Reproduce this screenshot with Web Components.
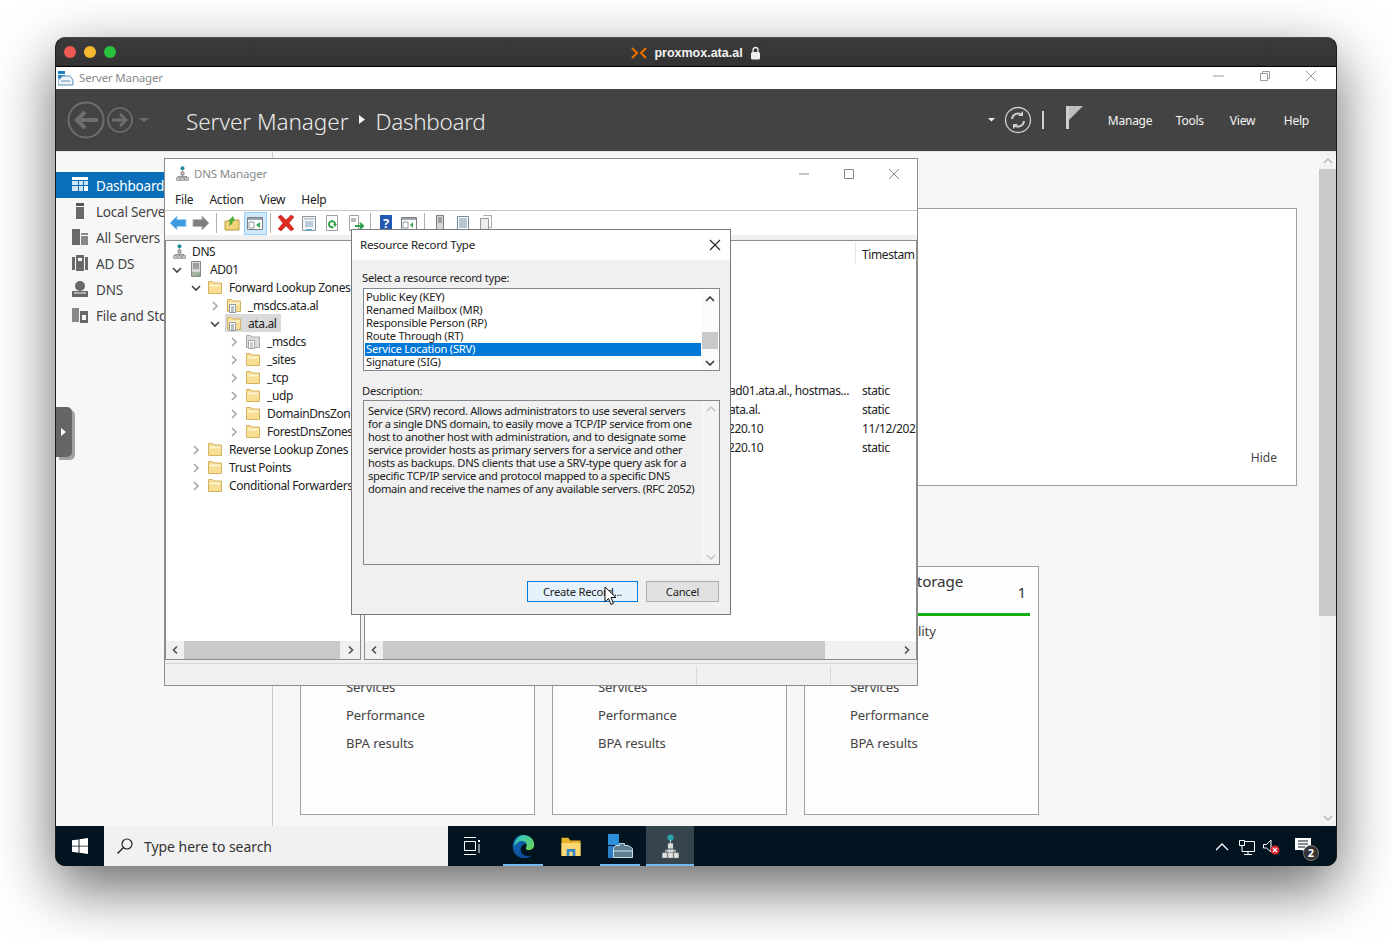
<!DOCTYPE html>
<html>
<head>
<meta charset="utf-8">
<title>Server Manager</title>
<style>
  html, body { margin: 0; background: #fff; }
  body {
    width: 1392px;
    height: 940px;
    overflow: hidden;
    padding: 37px 0 0 55px;
    box-sizing: border-box;
    font-family: "Noto Sans", "Open Sans", sans-serif;
    font-size: 12px;
    color: #222;
  }
</style>
</head>
<body>
<mac-window label="proxmox.ata.al">
  <server-manager></server-manager>
  <win-taskbar></win-taskbar>
</mac-window>

<script>
const chevDown = c => `<svg width="12" height="12" viewBox="0 0 12 12"><path d="M2 4l4 4 4-4" fill="none" stroke="${c || '#444'}" stroke-width="1.6"/></svg>`;
const chevRight = c => `<svg width="12" height="12" viewBox="0 0 12 12"><path d="M4 2l4 4-4 4" fill="none" stroke="${c || '#a6a6a6'}" stroke-width="1.6"/></svg>`;

const FOLDER = '<path d="M1.500 1.500h4l1.500 1.500h7.500v10.500h-13z" fill="#f8dd92" stroke="#d3b260"/><path d="M2.500 4.500h11v2h-11z" fill="#fdf3d0"/>';
const ICONS = {
  folder: `<svg width="16" height="15" viewBox="0 0 16 15">${FOLDER}</svg>`,
  zone: `<svg width="16" height="15" viewBox="0 0 16 15">${FOLDER}<path d="M3.500 6.500h6v8h-6z" fill="#fff" stroke="#8c9aa3"/><path d="M5 9h3M5 11h3M5 13h3" stroke="#6f7f88"/></svg>`,
  zoneGray: `<svg width="16" height="15" viewBox="0 0 16 15"><path d="M1.500 1.500h4l1.500 1.500h7.500v10.500h-13z" fill="#dcdcdc" stroke="#a8a8a8"/><path d="M3.500 6.500h6v8h-6z" fill="#fff" stroke="#a5a5a5"/><path d="M5 9h3M5 11h3M5 13h3" stroke="#999"/></svg>`,
  server: `<svg width="16" height="16" viewBox="0 0 16 16"><path d="M3.500.5h9v15h-9z" fill="#d8d8d8" stroke="#8a8a8a"/><path d="M5 3h6M5 5h6M5 7h6" stroke="#666"/><path d="M4 11h8v4h-8z" fill="#a9b3a4"/><path d="M10 13h1.500v1.500h-1.500z" fill="#39b54a"/></svg>`,
  dns: `<svg width="13" height="15" viewBox="0 0 16 18"><circle cx="8" cy="2.500" r="2.500" fill="#1f8f9a"/><path d="M7.500 5h1v3h-1zM2.500 12h11v1h-11zM2.500 12h1v2h-1zM7.500 11h1v3h-1zM12.500 12h1v2h-1z" fill="#777"/><path d="M6 7h4v4h-4z" fill="#b9b9b9" stroke="#777" stroke-width=".6"/><path d="M.5 14h4.500v3.500h-4.500zM5.800 14h4.500v3.500h-4.500zM11 14h4.500v3.500h-4.500z" fill="#c9c9c9" stroke="#777" stroke-width=".7"/></svg>`
};

class MacWindow extends HTMLElement {
  constructor() {
    super();
    this.attachShadow({ mode: 'open' });
    this.shadowRoot.innerHTML = `
      <style>
        :host {
          display: flex;
          flex-direction: column;
          width: 1282px;
          height: 829px;
          box-sizing: border-box;
          border: 1px solid #1d1d1d;
          border-top-color: #4c4c4c;
          border-bottom: 0;
          border-radius: 10px;
          overflow: hidden;
          background: #000;
          box-shadow: 0 22px 60px rgba(0,0,0,.6);
        }
        .bar {
          flex: none;
          height: 27px;
          display: flex;
          align-items: center;
          justify-content: center;
          position: relative;
          background: linear-gradient(#3b3b3b, #333);
          border-bottom: 1px solid #000;
          color: #f2f2f2;
          font-family: "Liberation Sans", sans-serif;
          font-weight: 700;
          font-size: 12.500px;
          gap: 7px;
          padding-top: 1px;
        }
        .lights { position: absolute; left: 8px; top: 8px; display: flex; gap: 8px; }
        .lights i { width: 12px; height: 12px; border-radius: 50%; display: block; }
      </style>
      <div class="bar">
        <div class="lights">
          <i style="background:#ee5a52"></i><i style="background:#f5b82e"></i><i style="background:#28c23f"></i>
        </div>
        <svg width="16" height="12" viewBox="0 0 16 12"><path d="M1 1l5 5-5 5M15 1l-5 5 5 5" fill="none" stroke="#e57000" stroke-width="2.200"/></svg>
        <span>${this.getAttribute('label')}</span>
        <svg width="11" height="14" viewBox="0 0 11 14"><path d="M3 6V4a2.500 2.500 0 015 0v2" fill="none" stroke="#eee" stroke-width="1.300"/><rect x="1" y="6" width="9" height="7.500" rx="1.500" fill="#eee"/></svg>
      </div>
      <slot></slot>
    `;
  }
}

class ServerManager extends HTMLElement {
  constructor() {
    super();
    this.attachShadow({ mode: 'open' });
    this.shadowRoot.innerHTML = `
      <style>
        :host { display: flex; flex-direction: column; flex: 1; min-height: 0; background: #f7f7f7; }
        .caption {
          flex: none; height: 22px; background: #fff; display: flex; align-items: center;
          padding-left: 2px; color: #8a8a8a; font-size: 11.500px; gap: 5px; letter-spacing: -.18px;
        }
        .caption span { margin-top: -2px; }
        .caption .ctl { margin-left: auto; display: flex; gap: 30px; padding-right: 17px; margin-top: -4px; }
        .ctl svg { display: block; }
        .head {
          flex: none; height: 62px; background: #434343; display: flex; align-items: center;
          color: #f0f0f0; box-sizing: border-box; padding: 0 27px 0 11px;
        }
        .crumb { font-size: 22.500px; font-weight: 300; margin-left: 35px; margin-top: 2px; display: flex; align-items: center; color: #eaeaea; letter-spacing: -.05px; }
        .tri { margin: 0 10px 3px 11px; }
        .tools { margin-left: auto; display: flex; align-items: center; }
        .flag { margin-left: -7px; margin-top: -5px; }
        .menu { display: flex; font-size: 12px; color: #f4f4f4; letter-spacing: -.25px; }
        .menu span:nth-child(1) { margin-left: 23px; width: 68px; }
        .menu span:nth-child(2) { width: 54px; }
        .menu span:nth-child(3) { width: 54px; }
        .body { flex: 1; min-height: 0; display: flex; position: relative; overflow: hidden; border-top: 1px solid #e4e4e4; box-sizing: border-box; }
        .main { flex: 1; min-width: 0; padding: 56px 22px 0 27px; box-sizing: border-box; }
        .welcome {
          height: 278px; box-sizing: border-box; background: #fff; border: 1px solid #a0a0a0;
          display: flex; align-items: flex-end; justify-content: flex-end;
          padding: 0 19px 19px 0; color: #444; font-size: 12px;
        }
        .cards { display: grid; grid-template-columns: repeat(3, 235px); gap: 17px; margin-top: 80px; }
        .tab {
          position: absolute; left: 0; top: 255px; width: 16px; height: 50px;
          background: #666; border-radius: 0 5px 5px 0; box-shadow: 3px 3px 0 #a2a2a2;
          display: flex; align-items: center; justify-content: center;
        }
        dns-manager { position: absolute; left: 108px; top: 6px; }
        record-dialog { position: absolute; left: 295px; top: 77px; }
        .cursor { position: absolute; left: 548px; top: 434px; }
      </style>
      <div class="caption">
        <svg width="16" height="16" viewBox="0 0 16 16"><path d="M0 1h7v3h-7zM0 5h7v3h-7z" fill="#1c7fc4"/><path d="M0 9h2l2-3h8l3 4v5h-15z" fill="#eef3f7" stroke="#5d93b9"/><path d="M3 11h9" stroke="#5d93b9"/></svg>
        <span>Server Manager</span>
        <div class="ctl">
          <svg width="16" height="12" viewBox="0 0 16 12"><path d="M2 6h11" stroke="#9a9a9a"/></svg>
          <svg width="16" height="12" viewBox="0 0 16 12"><path d="M3.500 3.500h7v7h-7zM5.500 3.500v-2h7v7h-2" fill="none" stroke="#9a9a9a"/></svg>
          <svg width="16" height="12" viewBox="0 0 16 12"><path d="M3 1l10 10M13 1l-10 10" stroke="#9a9a9a"/></svg>
        </div>
      </div>
      <div class="head">
        <svg width="84" height="40" viewBox="0 0 84 40">
          <circle cx="19" cy="20" r="17.500" fill="none" stroke="#6e6e6e" stroke-width="2"/>
          <path d="M31 20h-20M18 12l-8 8 8 8" fill="none" stroke="#6e6e6e" stroke-width="4"/>
          <circle cx="53" cy="20" r="12" fill="none" stroke="#6e6e6e" stroke-width="1.700"/>
          <path d="M45 20h14M53 14l6 6-6 6" fill="none" stroke="#6e6e6e" stroke-width="2.800"/>
          <path d="M72 18h10l-5 4z" fill="#6e6e6e"/>
        </svg>
        <div class="crumb">
          <span>Server Manager</span>
          <svg class="tri" width="6" height="9" viewBox="0 0 6 9"><path d="M0 0l6 4.500-6 4.500z" fill="#f4f4f4"/></svg>
          <span style="letter-spacing:-.3px">Dashboard</span>
        </div>
        <div class="tools">
          <svg width="84" height="30" viewBox="0 0 84 30">
            <path d="M0 13h7l-3.500 3.500z" fill="#eee"/>
            <circle cx="30" cy="15" r="12.500" fill="none" stroke="#cfcfcf" stroke-width="1.300"/>
            <path d="M24 14a6 6 0 0110-4M36 16a6 6 0 01-10 4" fill="none" stroke="#cfcfcf" stroke-width="2"/>
            <path d="M35 6v5h-5zM25 24v-5h5z" fill="#cfcfcf"/>
            <path d="M55 6v18" stroke="#cfcfcf" stroke-width="2"/>
          </svg>
          <svg class="flag" width="20" height="26" viewBox="0 0 20 26">
            <path d="M1 1h3v23h-3z" fill="#d0d0d0"/><path d="M4 1h14l-14 14z" fill="#bdbdbd"/>
          </svg>
          <div class="menu"><span>Manage</span><span>Tools</span><span>View</span><span>Help</span></div>
        </div>
      </div>
      <div class="body">
        <sm-sidebar></sm-sidebar>
        <div class="main">
          <div class="welcome">Hide</div>
          <div class="cards">
            <role-card></role-card>
            <role-card></role-card>
            <role-card name="File and Storage Services" count="1"></role-card>
          </div>
        </div>
        <win-vscroll></win-vscroll>
        <div class="tab"><svg width="6" height="8" viewBox="0 0 6 8"><path d="M0 0l5 4-5 4z" fill="#fff"/></svg></div>
        <dns-manager></dns-manager>
        <record-dialog></record-dialog>
        <svg class="cursor" width="14" height="20" viewBox="0 0 14 20"><path d="M1 1v15l3.500-3.500 2.500 6 2.500-1-2.500-6h5z" fill="#fff" stroke="#111"/></svg>
      </div>
    `;
  }
}

class SmSidebar extends HTMLElement {
  constructor() {
    super();
    this.attachShadow({ mode: 'open' });
    const g = '#6a6a6a';
    const items = [
      ['Dashboard', `<path d="M0 0h16v3h-16z" fill="#fff"/><path d="M0 4h6v4h-6zM7 4h4v4h-4zM12 4h4v4h-4zM0 9h6v5h-6zM7 9h4v5h-4z" fill="#cfe5f6"/><path d="M12 9h4v5h-4z" fill="#fff"/>`],
      ['Local Server', `<path d="M4 0h8v3h-8z" fill="#555"/><path d="M4 4h8v12h-8z" fill="${g}"/>`],
      ['All Servers', `<path d="M0 0h8v16h-8z" fill="${g}"/><path d="M9 4h7v2h-7zM9 7h7v9h-7z" fill="#888"/>`],
      ['AD DS', `<path d="M0 2h3v13h-3zM4 0h8v16h-8zM13 2h3v13h-3z" fill="${g}"/><path d="M6 3h4v3h-4z" fill="#f7f7f7"/>`],
      ['DNS', `<circle cx="8" cy="5" r="5" fill="${g}"/><path d="M0 10h16v6h-16z" fill="#666"/><path d="M2 12h12" stroke="#f7f7f7"/>`],
      ['File and Storage Services', `<path d="M0 1h7v14h-7z" fill="#888"/><path d="M8 4h8v12h-8z" fill="#666"/><path d="M10 8h4v5h-4z" fill="#f7f7f7"/>`]
    ];
    this.shadowRoot.innerHTML = `
      <style>
        :host { display: block; flex: none; width: 217px; box-sizing: border-box; border-right: 1px solid #c8c8c8; padding-top: 20px; }
        .item { height: 26px; display: flex; align-items: center; padding-left: 16px; gap: 8px; font-size: 13.500px; color: #444; white-space: nowrap; letter-spacing: -.2px; }
        .item span { padding-top: 2px; }
        .item.on { background: #0a6fb8; color: #fff; }
        svg { flex: none; }
      </style>
      ${items.map((it, i) => `
        <div class="item ${i === 0 ? 'on' : ''}">
          <svg width="16" height="16" viewBox="0 0 16 16">${it[1]}</svg><span>${it[0]}</span>
        </div>`).join('')}
    `;
  }
}

class RoleCard extends HTMLElement {
  constructor() {
    super();
    this.attachShadow({ mode: 'open' });
    this.shadowRoot.innerHTML = `
      <style>
        :host { display: block; height: 249px; box-sizing: border-box; border: 1px solid #a0a0a0; background: #fdfdfd; padding: 4px 8px 0 45px; color: #444; font-size: 13.100px; letter-spacing: -.1px; }
        .top { height: 42px; position: relative; font-size: 15.200px; color: #333; line-height: 20px; }
        .top b { font-weight: 400; display: block; width: 130px; }
        .top i { position: absolute; right: 4px; top: 11px; font-style: normal; }
        .bar { height: 3px; background: #12b012; margin-bottom: 1px; }
        .links div { height: 28px; line-height: 28px; }
      </style>
      <div class="top"><b>${this.getAttribute('name') || ''}</b><i>${this.getAttribute('count') || ''}</i></div>
      <div class="bar"></div>
      <div class="links">
        <div>Manageability</div><div>Events</div><div>Services</div><div>Performance</div><div>BPA results</div>
      </div>
    `;
  }
}

class WinVscroll extends HTMLElement {
  constructor() {
    super();
    this.attachShadow({ mode: 'open' });
    this.shadowRoot.innerHTML = `
      <style>
        :host { display: flex; flex-direction: column; flex: none; width: 17px; background: #f3f3f3; }
        .a { height: 17px; display: flex; align-items: center; justify-content: center; }
        .t { height: 447px; background: #c9c9c9; }
        .e { flex: 1; }
      </style>
      <div class="a"><svg width="12" height="8" viewBox="0 0 12 8"><path d="M2 6l4-4 4 4" fill="none" stroke="#b5b5b5" stroke-width="1.300"/></svg></div>
      <div class="t"></div><div class="e"></div>
      <div class="a"><svg width="12" height="8" viewBox="0 0 12 8"><path d="M2 2l4 4 4-4" fill="none" stroke="#b5b5b5" stroke-width="1.300"/></svg></div>
    `;
  }
}

class WinHscroll extends HTMLElement {
  constructor() {
    super();
    this.attachShadow({ mode: 'open' });
    const w = this.getAttribute('thumb');
    this.shadowRoot.innerHTML = `
      <style>
        :host { display: flex; flex: none; height: 18px; background: #f0f0f0; align-items: center; }
        .a { width: 18px; height: 18px; display: flex; align-items: center; justify-content: center; flex: none; }
        .t { height: 18px; background: #c9c9c9; width: ${w}px; flex: none; }
        .e { flex: 1; }
      </style>
      <div class="a"><svg width="8" height="10" viewBox="0 0 8 10"><path d="M6 1.500l-3.500 3.500 3.500 3.500" fill="none" stroke="#555" stroke-width="1.700"/></svg></div>
      <div class="t"></div><div class="e"></div>
      <div class="a"><svg width="8" height="10" viewBox="0 0 8 10"><path d="M2 1.500l3.500 3.500-3.500 3.500" fill="none" stroke="#555" stroke-width="1.700"/></svg></div>
    `;
  }
}

class DnsTree extends HTMLElement {
  constructor() {
    super();
    this.attachShadow({ mode: 'open' });
    const rows = [
      [-1, '', 'dns', 'DNS'],
      [0, 'o', 'server', 'AD01'],
      [1, 'o', 'folder', 'Forward Lookup Zones'],
      [2, 'c', 'zone', '_msdcs.ata.al'],
      [2, 'o', 'zone', 'ata.al', 1],
      [3, 'c', 'zoneGray', '_msdcs'],
      [3, 'c', 'folder', '_sites'],
      [3, 'c', 'folder', '_tcp'],
      [3, 'c', 'folder', '_udp'],
      [3, 'c', 'folder', 'DomainDnsZon'],
      [3, 'c', 'folder', 'ForestDnsZones'],
      [1, 'c', 'folder', 'Reverse Lookup Zones'],
      [1, 'c', 'folder', 'Trust Points'],
      [1, 'c', 'folder', 'Conditional Forwarders']
    ];
    this.shadowRoot.innerHTML = `
      <style>
        :host { display: block; flex: 1; min-height: 0; padding-top: 1px; overflow: hidden; white-space: nowrap; }
        .r { height: 18px; display: flex; align-items: center; color: #222; letter-spacing: -.38px; }
        .c { width: 12px; height: 12px; flex: none; margin-right: 5px; }
        .i { flex: none; display: flex; width: 16px; justify-content: center; }
        .t { margin-left: 6px; }
        .root .t { margin-left: 5px; }
        .sel { background: #d9d9d9; display: flex; align-items: center; height: 18px; padding-right: 4px; margin-left: -1px; padding-left: 1px; }
      </style>
      ${rows.map(r => {
        const inner = `<span class="i">${ICONS[r[2]]}</span><span class="t">${r[3]}</span>`;
        const chev = r[1] === 'o' ? chevDown() : r[1] === 'c' ? chevRight() : '';
        return `<div class="r ${r[0] < 0 ? 'root' : ''}" style="padding-left:${r[0] < 0 ? 5 : 5 + 19 * r[0]}px">
          ${r[0] < 0 ? '' : `<span class="c">${chev}</span>`}
          ${r[4] ? `<span class="sel">${inner}</span>` : inner}
        </div>`;
      }).join('')}
    `;
  }
}

class DnsManager extends HTMLElement {
  constructor() {
    super();
    this.attachShadow({ mode: 'open' });
    const sep = '<i class="sep"></i>';
    const b = (svg, cls) => `<span class="b ${cls || ''}"><svg width="18" height="18" viewBox="0 0 18 18">${svg}</svg></span>`;
    const pane = '<path d="M1.500 3.500h15v12h-15z" fill="#fff" stroke="#7d7d7d"/><path d="M2 4h14v2h-14z" fill="#9aa5ad"/><path d="M3 8h5v6h-5z" fill="none" stroke="#8a9aa5"/>';
    this.shadowRoot.innerHTML = `
      <style>
        :host { display: flex; flex-direction: column; width: 754px; height: 528px; box-sizing: border-box; border: 1px solid #8c8c8c; background: #f0f0f0; }
        .title { flex: none; height: 29px; background: #fff; display: flex; align-items: center; padding-left: 11px; gap: 5px; color: #8a8a8a; font-size: 11.500px; letter-spacing: -.2px; }
        .ctl { margin-left: auto; display: flex; gap: 33px; padding-right: 17px; }
        .ctl svg { display: block; }
        .menu { flex: none; height: 23px; background: #fff; display: flex; align-items: center; border-bottom: 1px solid #c9c9c9; box-sizing: border-box; padding-left: 10px; gap: 16px; letter-spacing: -.2px; color: #222; }
        .tb { flex: none; height: 24px; background: #fff; display: flex; align-items: center; padding-left: 1.500px; overflow: hidden; }
        .b { width: 23px; height: 23px; display: flex; align-items: center; justify-content: center; box-sizing: border-box; flex: none; }
        .b.on { background: #cce8ff; border: 1px solid #99d1ff; }
        .sep { width: 1px; height: 20px; background: #b0b0b0; flex: none; margin: 0 4px 0 3px; }
        .strip { flex: none; height: 5px; }
        .panes { flex: 1; min-height: 0; display: flex; gap: 3px; }
        .pane { display: flex; flex-direction: column; background: #fff; border: 1px solid #8c8c8c; box-sizing: border-box; overflow: hidden; }
        .left { width: 196px; }
        .right { flex: 1; min-width: 0; }
        .rows { flex: 1; min-height: 0; white-space: nowrap; overflow: hidden; letter-spacing: -.4px; }
        .hdr { height: 23px; position: relative; margin-bottom: 117px; }
        .hdr span { position: absolute; left: 497px; top: 5px; }
        .hdr i { position: absolute; left: 490px; top: 1px; width: 1px; height: 21px; background: #e5e5e5; }
        .row { display: flex; height: 19px; line-height: 19px; }
        .row .d { margin-left: 364px; width: 126px; flex: none; }
        .row .s { padding-left: 7px; }
        .status { flex: none; height: 22px; margin-top: 3px; border-top: 1px solid #d5d5d5; display: flex; box-sizing: border-box; }
        .status i { margin-left: 531px; width: 1px; background: #dadada; margin-top: 2px; }
        .status i + i { margin-left: 133px; }
      </style>
      <div class="title">
        ${ICONS.dns}<span>DNS Manager</span>
        <div class="ctl">
          <svg width="12" height="12" viewBox="0 0 12 12"><path d="M1 6h10" stroke="#888"/></svg>
          <svg width="12" height="12" viewBox="0 0 12 12"><path d="M1.500 1.500h9v9h-9z" fill="none" stroke="#888"/></svg>
          <svg width="12" height="12" viewBox="0 0 12 12"><path d="M1 1l10 10M11 1l-10 10" stroke="#888"/></svg>
        </div>
      </div>
      <div class="menu"><span>File</span><span>Action</span><span>View</span><span>Help</span></div>
      <div class="tb">
        ${b('<path d="M1 9l7-7v3.500h9v7h-9v3.500z" fill="#3d9ae0" stroke="#9cd0f5"/>')}
        ${b('<path d="M17 9l-7-7v3.500h-9v7h9v3.500z" fill="#7f7f7f" stroke="#b5b5b5"/>')}
        ${sep}
        ${b('<path d="M2 7h5l1-1h8v10h-14z" fill="#f2d27a" stroke="#bd9a45"/><path d="M6 12l1-5-2 0 5-5 2 5-2 0-1 3z" fill="#4fae3a"/>')}
        ${b('<path d="M1.500 3.500h15v12h-15z" fill="#fff" stroke="#7d7d7d"/><path d="M2 4h14v2h-14z" fill="#9aa5ad"/><path d="M3 8h5v6h-5z" fill="none" stroke="#8a9aa5"/><path d="M14 8v6l-4-3z" fill="#3aa655"/>', 'on')}
        ${sep}
        ${b('<path d="M1 3l3-2 5 5 5-5 3 2-5 6 5 6-3 2-5-5-5 5-3-2 5-6z" fill="#e02b20" stroke="#b5201a" stroke-width=".5"/>')}
        ${b('<path d="M2.500 2.500h13v14h-13z" fill="#f4f6f8" stroke="#8a949b"/><path d="M4 4h10v1.500h-10z" fill="#b6c0c7"/><path d="M5 8h8M5 10h8M5 12h8" stroke="#7ea3bf"/><path d="M6 15h6v1.500h-6z" fill="#5ea7d8"/>')}
        ${b('<path d="M3.500 1.500h11v15h-11z" fill="#fff" stroke="#a0a0a0"/><path d="M12 10a3 3 0 10-1.500 2.800" fill="none" stroke="#2fa24a" stroke-width="2"/><path d="M10 10h4l-2 3z" fill="#2fa24a"/>')}
        ${b('<path d="M3.500 1.500h9v15h-9z" fill="#fff" stroke="#a0a0a0"/><path d="M5 5h5M5 7h5" stroke="#777"/><path d="M9 12h8M14 9l3 3-3 3" stroke="#2fa24a" stroke-width="2" fill="none"/>')}
        ${sep}
        <span class="b"><svg width="18" height="18" viewBox="0 0 18 18"><path d="M3 1h12v16h-12z" fill="#2458b5"/><text x="9" y="14" font-size="13" font-weight="700" fill="#fff" text-anchor="middle">?</text></svg></span>
        ${b(pane + '<path d="M13 8v6l-3-3z" fill="#3aa655"/>')}
        ${sep}
        ${b('<path d="M5.500 1.500h7v15h-7z" fill="#d8d8d8" stroke="#7d7d7d"/><path d="M7 4h4M7 6h4M7 8h4" stroke="#666"/>')}
        ${b('<path d="M3.500 2.500h11v13h-11z" fill="#fff" stroke="#6d8ba0"/><path d="M5 5h8M5 7h8M5 9h8M5 11h8M5 13h8" stroke="#6d8ba0"/>')}
        ${b('<path d="M3.500 4.500h8v12h-8z" fill="#eee" stroke="#999"/><path d="M6.500 1.500h8v12h-3" fill="none" stroke="#aaa"/>')}
      </div>
      <div class="strip"></div>
      <div class="panes">
        <div class="pane left">
          <dns-tree></dns-tree>
          <win-hscroll thumb="156"></win-hscroll>
        </div>
        <div class="pane right">
          <div class="rows">
            <div class="hdr"><i></i><span>Timestam</span></div>
            <div class="row"><span class="d">ad01.ata.al., hostmas...</span><span class="s">static</span></div>
            <div class="row"><span class="d">ata.al.</span><span class="s">static</span></div>
            <div class="row"><span class="d" style="text-indent:-1px">220.10</span><span class="s">11/12/202</span></div>
            <div class="row"><span class="d" style="text-indent:-1px">220.10</span><span class="s">static</span></div>
          </div>
          <win-hscroll thumb="442"></win-hscroll>
        </div>
      </div>
      <div class="status"><i></i><i></i></div>
    `;
  }
}

class RecordDialog extends HTMLElement {
  constructor() {
    super();
    this.attachShadow({ mode: 'open' });
    const types = ['Public Key (KEY)', 'Renamed Mailbox (MR)', 'Responsible Person (RP)', 'Route Through (RT)', 'Service Location (SRV)', 'Signature (SIG)'];
    const desc = [
      'Service (SRV) record. Allows administrators to use several servers',
      'for a single DNS domain, to easily move a TCP/IP service from one',
      'host to another host with administration, and to designate some',
      'service provider hosts as primary servers for a service and other',
      'hosts as backups. DNS clients that use a SRV-type query ask for a',
      'specific TCP/IP service and protocol mapped to a specific DNS',
      'domain and receive the names of any available servers. (RFC 2052)'
    ];
    this.shadowRoot.innerHTML = `
      <style>
        :host { display: flex; flex-direction: column; width: 380px; height: 386px; box-sizing: border-box; border: 1px solid #7a7a7a; background: #f0f0f0; color: #222; letter-spacing: -.25px; }
        .title { flex: none; height: 30px; background: #fff; display: flex; align-items: center; padding: 0 9px 0 8px; justify-content: space-between; font-size: 11.600px; }
        .title span { margin-top: -2px; }
        .title svg { display: block; }
        .body { flex: 1; padding: 9px 10px 0 10px; display: flex; flex-direction: column; font-size: 11.200px; }
        label { display: block; height: 17px; line-height: 17px; margin-bottom: 2px; }
        .list { height: 83px; box-sizing: border-box; margin-left: 1px; width: 357px; border: 1px solid #828790; background: #fff; display: flex; padding: 1.500px 1px 0; margin-bottom: 11px; }
        .list ul { list-style: none; margin: 0; padding: 0; width: 336px; flex: none; }
        .list li { padding-left: 1px; height: 13px; line-height: 11.500px; }
        .list li.on { background: #0078d7; color: #fff; }
        .sb { width: 16px; margin-left: 1px; display: flex; flex-direction: column; align-items: center; position: relative; background: #fbfbfb; }
        .sb .th { position: absolute; left: 0; right: 0; top: 41px; height: 17px; background: #c9c9c9; }
        .sb svg { margin-top: 5px; }
        .sb svg:last-child { margin-top: auto; margin-bottom: 4px; }
        .desc { height: 165px; box-sizing: border-box; margin-left: 1px; width: 357px; border: 1px solid #828790; display: flex; padding: 2px 0 0 4px; line-height: 13px; white-space: nowrap; }
        .desc .txt { flex: 1; min-width: 0; padding-top: 1px; letter-spacing: -.34px; }
        .desc .sb { background: #f3f3f3; margin: -2px 1px 0 0; border-left: 1px solid #fafafa; box-sizing: border-box; }
        .btns { display: flex; gap: 8px; margin-top: 16px; padding-left: 165px; }
        .btn { height: 21px; box-sizing: border-box; display: flex; align-items: center; justify-content: center; background: #e1e1e1; border: 1px solid #adadad; }
        .btn.def { width: 111px; background: #e5f1fb; border-color: #0078d7; }
        .btn.can { width: 73px; }
      </style>
      <div class="title">
        <span>Resource Record Type</span>
        <svg width="12" height="12" viewBox="0 0 12 12"><path d="M1 1l10 10M11 1l-10 10" stroke="#222" stroke-width="1.100"/></svg>
      </div>
      <div class="body">
        <label>Select a resource record type:</label>
        <div class="list">
          <ul>${types.map(t => `<li class="${t.includes('SRV') ? 'on' : ''}">${t}</li>`).join('')}</ul>
          <div class="sb">
            <svg width="10" height="6" viewBox="0 0 10 6"><path d="M1 5l4-4 4 4" fill="none" stroke="#333" stroke-width="1.500"/></svg>
            <div class="th"></div>
            <svg width="10" height="6" viewBox="0 0 10 6"><path d="M1 1l4 4 4-4" fill="none" stroke="#333" stroke-width="1.500"/></svg>
          </div>
        </div>
        <label style="margin-bottom:1px">Description:</label>
        <div class="desc">
          <div class="txt">${desc.join('<br>')}</div>
          <div class="sb">
            <svg width="10" height="6" viewBox="0 0 10 6"><path d="M1 5l4-4 4 4" fill="none" stroke="#c4c4c4" stroke-width="1.500"/></svg>
            <svg width="10" height="6" viewBox="0 0 10 6"><path d="M1 1l4 4 4-4" fill="none" stroke="#c4c4c4" stroke-width="1.500"/></svg>
          </div>
        </div>
        <div class="btns"><div class="btn def">Create Record...</div><div class="btn can">Cancel</div></div>
      </div>
    `;
  }
}

class WinTaskbar extends HTMLElement {
  constructor() {
    super();
    this.attachShadow({ mode: 'open' });
    this.shadowRoot.innerHTML = `
      <style>
        :host { display: flex; flex: none; height: 40px; background: #02141f; align-items: stretch; }
        .start { width: 48px; display: flex; align-items: center; justify-content: center; flex: none; }
        .search { width: 344px; flex: none; background: #f1f1f1; display: flex; align-items: center; padding-left: 12px; box-sizing: border-box; gap: 10px; color: #333; font-size: 14px; letter-spacing: -.05px; }
        .app { width: 48px; display: flex; align-items: center; justify-content: center; flex: none; position: relative; box-sizing: border-box; }
        .app.run::after { content: ''; position: absolute; left: 4px; right: 4px; bottom: 0; height: 2px; background: #76b9ed; }
        .app.cur { background: #36444d; margin-left: 2px; }
        .app.cur::after { left: 0; right: 0; }
        .tray { margin-left: auto; display: flex; align-items: center; padding-right: 16px; }
        .tray svg { display: block; }
      </style>
      <div class="start"><svg width="16" height="16" viewBox="0 0 18 18"><path d="M0 2.600l7.400-1v7h-7.400zM8.400 1.400l9.600-1.400v8.600h-9.600zM0 9.600h7.400v7l-7.400-1zM8.400 9.600h9.600v8.400l-9.600-1.400z" fill="#fff"/></svg></div>
      <div class="search">
        <svg width="18" height="18" viewBox="0 0 18 18"><circle cx="11" cy="7" r="5" fill="none" stroke="#222" stroke-width="1.200"/><path d="M7.500 10.500l-6 6" stroke="#222" stroke-width="1.400"/></svg>
        <span>Type here to search</span>
      </div>
      <div class="app"><svg width="18" height="18" viewBox="0 0 18 18"><path d="M1 .5h12M1 17.500h12M1.500 4.500h11v9h-11z" fill="none" stroke="#fff"/><path d="M15 3h2v2h-2z" fill="#fff"/><path d="M16 7v9" stroke="#fff"/></svg></div>
      <div class="app run" style="margin-left:3px"><svg width="25" height="25" viewBox="0 0 26 28">
        <defs>
          <linearGradient id="e1" x1="0" y1="0" x2="1" y2="1"><stop offset="0" stop-color="#0f6fb8"/><stop offset="1" stop-color="#0b3f8c"/></linearGradient>
          <linearGradient id="e2" x1="0" y1="0" x2="1" y2="1"><stop offset="0" stop-color="#2cc4cf"/><stop offset="1" stop-color="#6fd64f"/></linearGradient>
        </defs>
        <path d="M13 1C5 1 1 7 1 14c0 8 6 13 12 13 4 0 7-1 9-3-5 2-11 0-12-5-1-4 2-8 6-8 3 0 6 2 9 1-1-2-3-3-5-2z" fill="url(#e1)"/>
        <path d="M13 1c7 0 12 5 12 11 0 4-3 6-6 6-2 0-4-1-3-3 1-3 1-6-3-7-4-1-8 1-10 6C3 7 7 1 13 1z" fill="url(#e2)"/>
      </svg></div>
      <div class="app"><svg width="22" height="19" viewBox="0 0 24 22"><path d="M1 1h8l2 3h12v18h-22z" fill="#e8b32a"/><path d="M1 7h22v15h-22z" fill="#f8d774"/><path d="M7 22v-8h10v8h-3v-5h-4v5z" fill="#2f86c9"/></svg></div>
      <div class="app run" style="margin-left:1px"><svg width="25" height="24" viewBox="0 0 25 24"><path d="M0 0h11v11h-11z" fill="#2d8fd8"/><path d="M0 12h11v12h-11z" fill="#2b7fc4"/><path d="M5.500 14.500l2-3h4v-2h5v2h4l4 3v9h-19z" fill="#5d7d90" stroke="#c8dbe6"/><path d="M6 17h18" stroke="#d8e6ee"/></svg></div>
      <div class="app run cur"><svg width="17" height="25" viewBox="0 0 16 24"><circle cx="8" cy="3.500" r="3" fill="#2aa0a8"/><path d="M7.500 6h1v4h-1z" fill="#ccc"/><path d="M5.500 9h5v5h-5z" fill="#d8d8d8"/><path d="M3 15h10v1h-10zM3 15h1v3h-1zM12 15h1v3h-1z" fill="#ccc"/><path d="M5 15h6v3h-6z" fill="#d8d8d8"/><path d="M0 18h5v5h-5zM5.500 18h5v5h-5zM11 18h5v5h-5z" fill="#e2e2e2" stroke="#777" stroke-width=".4"/></svg></div>
      <div class="tray">
        <svg width="104" height="30" viewBox="0 0 104 30">
          <path d="M0 19l6-6 6 6" fill="none" stroke="#fff" stroke-width="1.300"/>
          <path d="M23.500 9.500h5v5h-5z" fill="none" stroke="#fff"/><path d="M28.500 10.500h10v10h-12.500v-6M32 20.500v3M28 23.500h8" fill="none" stroke="#fff"/>
          <path d="M47.500 13.500h3l4.500-4.500v12l-4.500-4h-3z" fill="none" stroke="#fff"/>
          <circle cx="59" cy="19" r="4.500" fill="#e0262e"/><path d="M57 17l4 4M61 17l-4 4" stroke="#fff" stroke-width="1.200"/>
          <path d="M79 7h16v12h-4l-2.500 2-2.500-2h-7z" fill="#fff"/><path d="M82 10h10M82 13h10M82 16h7" stroke="#02141f"/>
          <circle cx="95" cy="22" r="7.500" fill="#333" stroke="#777"/>
          <text x="95" y="26" font-size="11" font-weight="700" fill="#fff" text-anchor="middle">2</text>
        </svg>
      </div>
    `;
  }
}

customElements.define('mac-window', MacWindow);
customElements.define('role-card', RoleCard);
customElements.define('sm-sidebar', SmSidebar);
customElements.define('win-vscroll', WinVscroll);
customElements.define('win-hscroll', WinHscroll);
customElements.define('dns-tree', DnsTree);
customElements.define('dns-manager', DnsManager);
customElements.define('record-dialog', RecordDialog);
customElements.define('win-taskbar', WinTaskbar);
customElements.define('server-manager', ServerManager);
</script>
</body>
</html>
